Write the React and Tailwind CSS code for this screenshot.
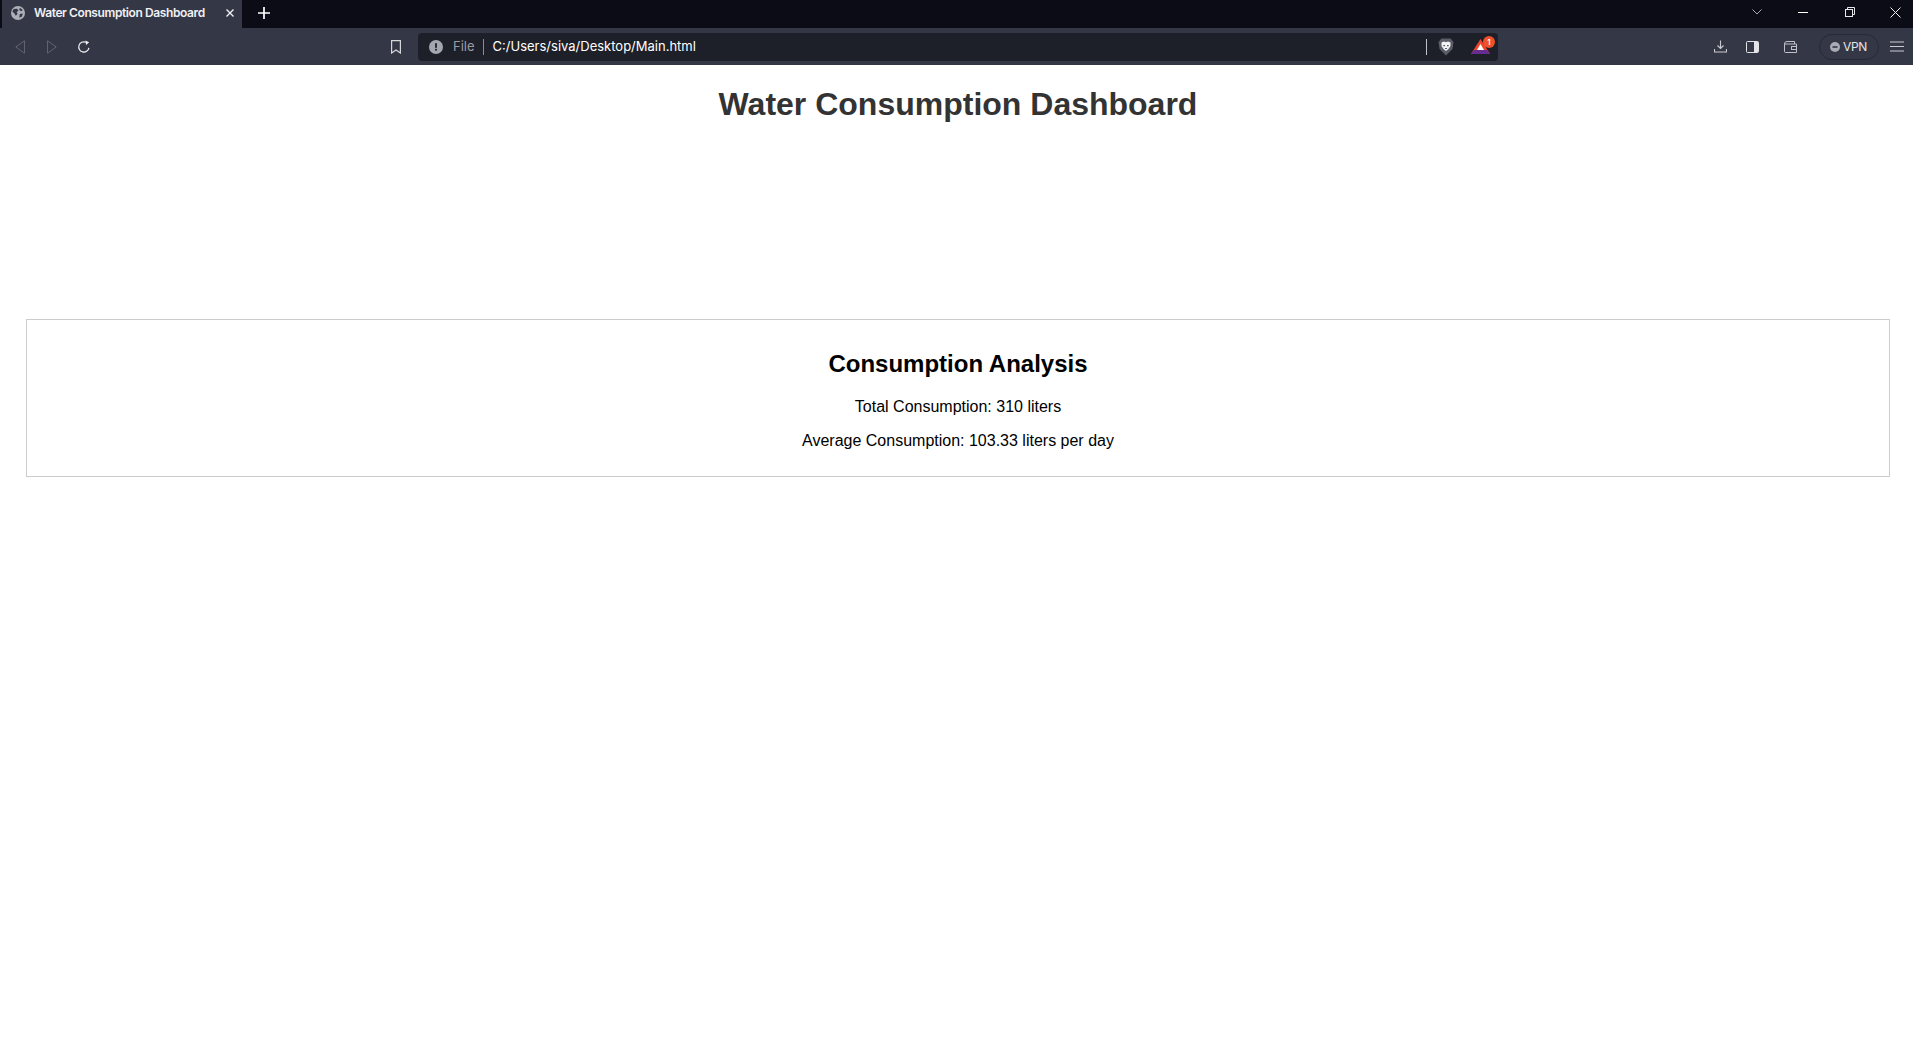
import React from "react";

const TabBar = () => (
  <div className="flex h-[28px] items-stretch bg-[#0b0c15]">
    <div className="ml-[2px] flex w-[240px] items-center bg-[#343746] pb-[2px] pl-[9px]">
      <svg width="14" height="14" viewBox="0 0 16 16" className="shrink-0">
        <circle cx="8" cy="8" r="8" fill="#aeb0b8" />
        <path d="M3 3.5 L7 3 L8.5 5 L6.5 7 L7.5 9 L5.5 11 L3.5 8 L1.5 6.5 Z M10 2 L13.5 4.5 L11.5 6 L9.5 4.5 Z M10 9 L13.5 8.5 L12.5 12 L9.5 13.5 Z" fill="#343746" />
      </svg>
      <span className="ml-[9px] whitespace-nowrap font-['Inter',sans-serif] text-[12px] font-semibold tracking-[-0.4px] text-[#f0f0f3]">Water Consumption Dashboard</span>
      <svg width="8" height="8" viewBox="0 0 8 8" className="ml-auto mr-[8px] shrink-0" stroke="#f0f0f3" strokeWidth="1.4">
        <path d="M0.5 0.5 L7.5 7.5 M7.5 0.5 L0.5 7.5" />
      </svg>
    </div>
    <div className="ml-[16px] flex items-center pb-[2px]">
      <svg width="12" height="12" viewBox="0 0 12 12" stroke="#ffffff" strokeWidth="1.7">
        <path d="M6 0 V12 M0 6 H12" />
      </svg>
    </div>
    <div className="ml-auto mr-[12px] flex items-center pb-[4px]">
      <svg width="10" height="6" viewBox="0 0 10 6" fill="none" stroke="#a8a8b0" strokeWidth="1" className="mr-[36px]">
        <path d="M0.5 0.5 L5 5 L9.5 0.5" />
      </svg>
      <svg width="10" height="1" viewBox="0 0 10 1" className="mr-[37px]">
        <rect width="10" height="1" fill="#ffffff" />
      </svg>
      <svg width="10" height="10" viewBox="0 0 10 10" fill="none" stroke="#e8e8ec" strokeWidth="1" className="mr-[35px]">
        <rect x="0.5" y="2.5" width="7" height="7" />
        <path d="M2.5 2.5 V0.5 H9.5 V7.5 H7.5" />
      </svg>
      <svg width="11" height="11" viewBox="0 0 11 11" fill="none" stroke="#f0f0f3" strokeWidth="1">
        <path d="M0.5 0.5 L10.5 10.5 M10.5 0.5 L0.5 10.5" />
      </svg>
    </div>
  </div>
);

const AddressBar = () => (
  <div className="ml-[17px] flex h-[28px] w-[1080px] shrink-0 items-center rounded-[4px] bg-[#1e2029] pl-[11px]">
    <svg width="14" height="14" viewBox="0 0 14 14" className="shrink-0">
      <circle cx="7" cy="7" r="7" fill="#a5a7b0" />
      <rect x="6.1" y="3.2" width="1.8" height="4.6" fill="#1e2029" />
      <rect x="6.1" y="8.8" width="1.8" height="1.8" fill="#1e2029" />
    </svg>
    <span className="ml-[10px] font-['Inter',sans-serif] text-[13px] text-[#9a9ca5]">File</span>
    <div className="ml-[8px] h-[16px] w-px bg-[#8a8c95]" />
    <span className="ml-[9px] font-['Inter',sans-serif] text-[13px] text-white">C:/Users/siva/Desktop/Main.html</span>
    <div className="ml-auto h-[16px] w-px bg-[#c0c0c6]" />
    <svg width="16" height="18" viewBox="0 0 16 18" className="ml-[11px] shrink-0">
      <path d="M3.5 0.5 L12.5 0.5 L15.5 4 L14.5 11 L8 17.5 L1.5 11 L0.5 4 Z" fill="#5a5c66" />
      <path d="M3.5 4.5 L6 3.5 L8 4.2 L10 3.5 L12.5 4.5 L12.5 8 L10.5 11 L8 13 L5.5 11 L3.5 8 Z" fill="#f2f2f4" />
      <path d="M5.3 7 H7 V8.2 H5.3 Z M9 7 H10.7 V8.2 H9 Z M7 10 H9 V11 H7 Z" fill="#5a5c66" />
    </svg>
    <div className="relative ml-[17px] mr-[8px] h-[15px] w-[19px] shrink-0">
      <svg width="19" height="15" viewBox="0 0 19 15">
        <path d="M9.5 0 L19 15 L0 15 Z" fill="#f0452a" />
        <path d="M3 11 L16 11 L19 15 L0 15 Z" fill="#662d91" />
        <path d="M9.5 5 L13 11 L6 11 Z" fill="#ffffff" />
      </svg>
      <span className="absolute -right-[5px] -top-[3px] flex h-[12px] w-[12px] items-center justify-center rounded-full bg-[#f0502c] font-['Inter',sans-serif] text-[8px] font-semibold text-white">1</span>
    </div>
  </div>
);

const Toolbar = () => (
  <div className="flex h-[37px] items-center bg-[#343746] pl-[15px]">
    <svg width="10" height="14" viewBox="0 0 10 14" fill="none" stroke="#61636f" strokeWidth="1" className="shrink-0">
      <path d="M9.5 0.8 L0.8 7 L9.5 13.2 Z" />
    </svg>
    <svg width="10" height="14" viewBox="0 0 10 14" fill="none" stroke="#61636f" strokeWidth="1" className="ml-[22px] shrink-0">
      <path d="M0.5 0.8 L9.2 7 L0.5 13.2 Z" />
    </svg>
    <svg width="14" height="14" viewBox="0 0 15 15" fill="none" stroke="#f0f0f3" strokeWidth="1.3" className="ml-[20px] shrink-0">
      <path d="M12.8 8.5 A5.5 5.5 0 1 1 9.5 2.4" />
      <path d="M9 0.5 L13 2.5 L9.7 5.3 Z" fill="#f0f0f3" stroke="none" />
    </svg>
    <svg width="10" height="14" viewBox="0 0 10 14" fill="none" stroke="#d5d6da" strokeWidth="1.2" className="ml-[300px] shrink-0">
      <path d="M0.6 0.6 H9.4 V13 L5 10 L0.6 13 Z" />
    </svg>
    <AddressBar />
    <svg width="13" height="13" viewBox="0 0 13 13" fill="none" stroke="#c9cad0" strokeWidth="1.1" className="ml-[216px] shrink-0">
      <path d="M6.5 0.5 V8 M3.5 5.5 L6.5 8.5 L9.5 5.5 M0.5 9 V12 H12.5 V9" />
    </svg>
    <svg width="13" height="12" viewBox="0 0 13 12" className="ml-[19px] shrink-0">
      <rect x="0.5" y="0.5" width="12" height="11" rx="1" fill="#343746" stroke="#e4e4e8" />
      <rect x="8" y="1" width="4" height="10" fill="#e4e4e8" />
    </svg>
    <svg width="13" height="12" viewBox="0 0 13 12" fill="none" stroke="#c0c1c8" strokeWidth="1" className="ml-[25px] shrink-0">
      <path d="M0.5 3 V10.5 A1 1 0 0 0 1.5 11.5 H12.5 V3 H0.5 Z M0.5 3 Q0.5 0.5 3 0.5 H10.5 V3" />
      <rect x="7.5" y="5.5" width="5" height="3" />
    </svg>
    <div className="ml-[22px] flex h-[26px] w-[60px] shrink-0 items-center rounded-full border border-[#272933] pl-[10px]">
      <svg width="10" height="10" viewBox="0 0 10 10" className="shrink-0">
        <circle cx="5" cy="5" r="5" fill="#a9abb5" />
        <rect x="2.5" y="4.2" width="5" height="1.6" fill="#343746" />
      </svg>
      <span className="ml-[3px] font-['Inter',sans-serif] text-[12px] tracking-[-0.3px] text-[#e4e4e8]">VPN</span>
    </div>
    <svg width="14" height="11" viewBox="0 0 14 11" stroke="#c9cad0" strokeWidth="1.2" className="ml-[11px] shrink-0">
      <path d="M0 1 H14 M0 5.5 H14 M0 10 H14" />
    </svg>
  </div>
);

export default function App() {
  return (
    <div className="min-h-[1037px] bg-white font-['Liberation_Sans',Arial,sans-serif]">
      <TabBar />
      <Toolbar />
      <h1 className="ml-[3px] mt-[21px] text-center text-[32px] font-bold leading-[37px] text-[#333333]">Water Consumption Dashboard</h1>
      <section className="ml-[26px] mt-[196px] h-[158px] w-[1864px] border border-[#cccccc] pt-[30px] text-center text-black">
        <h2 className="text-[24px] font-bold leading-[28px]">Consumption Analysis</h2>
        <p className="mt-[20px] text-[16px] leading-[18px]">Total Consumption: 310 liters</p>
        <p className="mt-[16px] text-[16px] leading-[18px]">Average Consumption: 103.33 liters per day</p>
      </section>
    </div>
  );
}
